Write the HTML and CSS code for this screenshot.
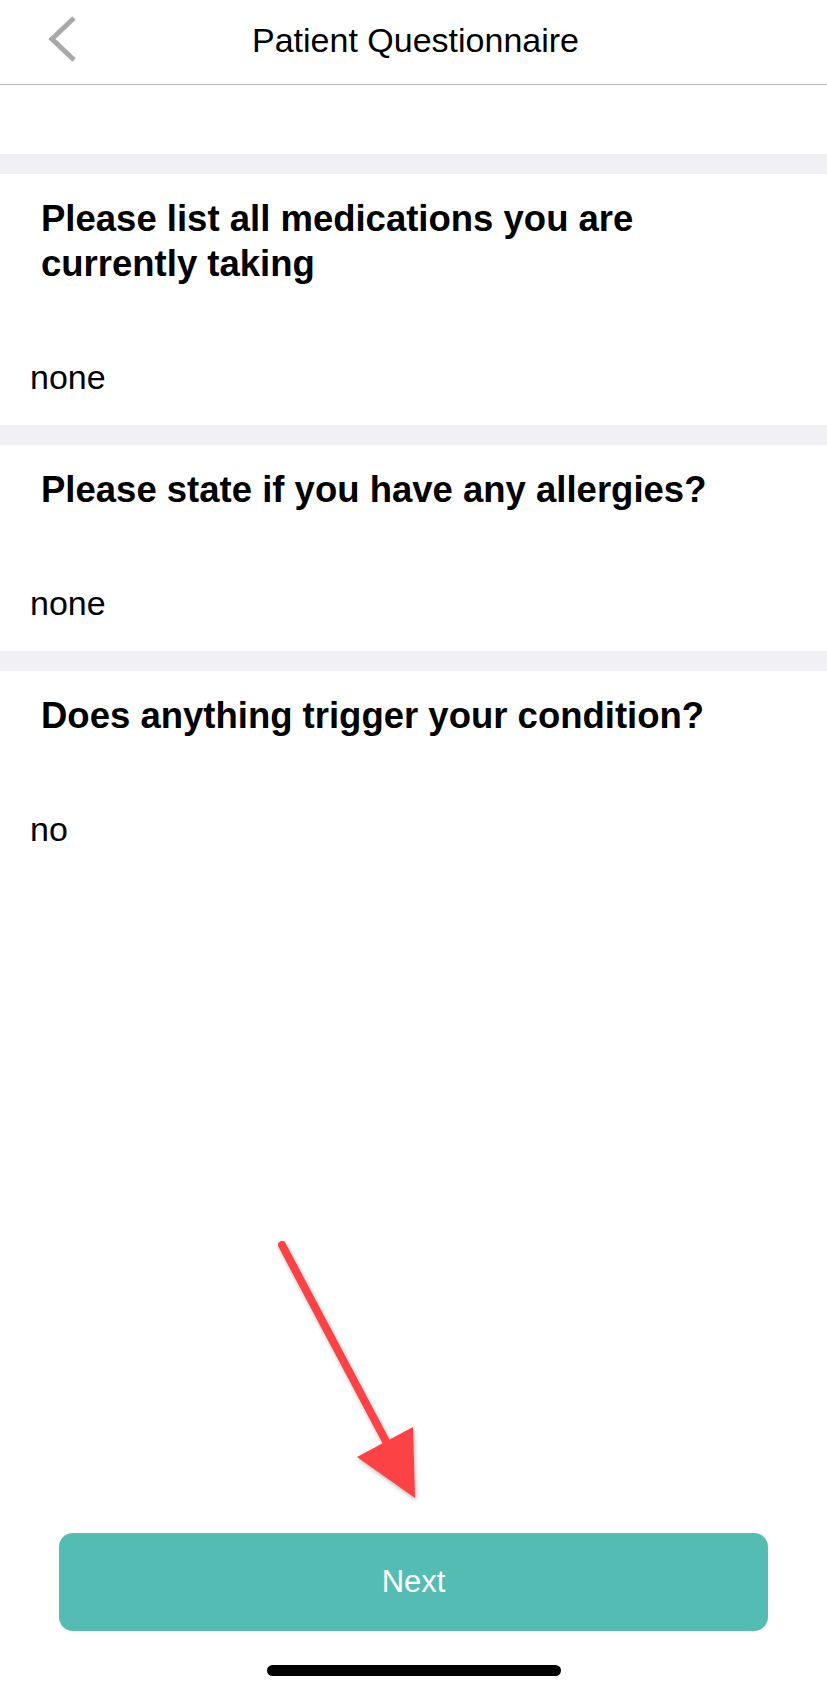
FILE: index.html
```html
<!DOCTYPE html>
<html lang="en">
<head>
  <meta charset="UTF-8" />
  <meta name="viewport" content="width=device-width, initial-scale=1.0"/>
  <title>Patient Questionnaire</title>
  <link rel="stylesheet" href="styles.css">
</head>
<body>

  <header class="topbar">
    <a class="back" href="#">
      <svg width="34" height="48" viewBox="0 0 34 48"><polyline points="27,3 5,24 27,45" fill="none" stroke="#a9a9a9" stroke-width="5"/></svg>
    </a>
    <h1>Patient Questionnaire</h1>
  </header>

  <main class="questions">
    <div class="spacer"></div>

    <section class="question">
      <h2>Please list all medications you are currently taking</h2>
      <p class="answer">none</p>
    </section>

    <section class="question">
      <h2>Please state if you have any allergies?</h2>
      <p class="answer">none</p>
    </section>

    <section class="question">
      <h2>Does anything trigger your condition?</h2>
      <p class="answer">no</p>
    </section>
  </main>

  <footer class="actions">
    <button type="button" class="next">Next</button>
    <div class="home-bar"></div>
  </footer>

  <!-- annotation arrow drawn over the page -->
  <svg class="arrow" width="160" height="275" viewBox="270 1235 160 275">
    <g class="arrow-shape">
      <line x1="282" y1="1245" x2="389" y2="1447" stroke="#fd4246" stroke-width="8" stroke-linecap="round"/>
      <polygon points="357,1457 413,1427 415,1498" fill="#fd4246"/>
    </g>
  </svg>

</body>
</html>
```

FILE: styles.css
```css
body {margin: 0; font-family: "Liberation Sans", Arial, sans-serif; background-color: #fff; color: #000; height: 1692px; display: flex; flex-direction: column; position: relative;}

.topbar {height: 84px; border-bottom: 1px solid #bdbdbd; display: flex; align-items: center; justify-content: center; position: relative; flex-shrink: 0;}
.topbar h1 {margin: 0 0 4px 4px; font-size: 34px; font-weight: normal;}
.back {position: absolute; left: 47px; top: 15px; display: block; line-height: 0;}

.questions {flex: 1;}
.spacer {height: 69px;}
.question {border-top: 20px solid #f0f0f5; padding: 22px 0 28px 0;}
.question:last-child {padding-bottom: 0;}
.question h2 {margin: 0 40px 0 41px; font-size: 36.5px; line-height: 45px; font-weight: bold;}
.answer {margin: 71px 0 0 30px; font-size: 34px; line-height: 40px;}

.actions {display: flex; flex-direction: column; align-items: center; padding-bottom: 16px;}
.next {width: 709px; height: 98px; background-color: #55bcb4; color: #fff; border: none; border-radius: 14px; font-family: inherit; font-size: 31px; cursor: pointer;}
.home-bar {width: 294px; height: 11px; border-radius: 6px; background-color: #000; margin-top: 34px;}

.arrow {position: absolute; left: 270px; top: 1235px; pointer-events: none;}
.arrow-shape {filter: drop-shadow(1px 2px 2px rgba(0,0,0,0.3));}
```
